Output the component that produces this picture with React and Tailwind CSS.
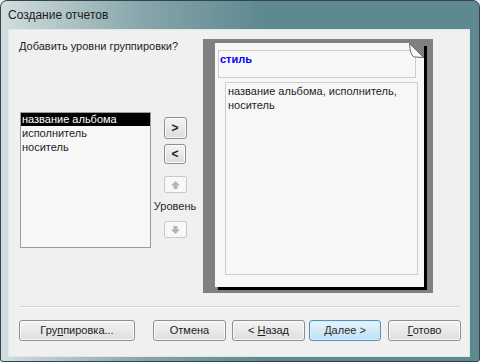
import React from 'react';

const font = { fontFamily: '"Liberation Sans", Arial, sans-serif' };

// маленькая стрелка для неактивных кнопок уровня
const LevelArrow = ({ down }) => (
  <svg width="9" height="8" viewBox="0 0 9 8" className={down ? 'rotate-180' : ''}>
    <path d="M4.5 0 L9 4.5 L6.5 4.5 L6.5 8 L2.5 8 L2.5 4.5 L0 4.5 Z" fill="#b4b4b4" />
  </svg>
);

const MoveButton = ({ children, className }) => (
  <div
    className={`flex items-center justify-center rounded-[3px] border border-[#8e8f8f] bg-linear-to-b from-[#f4f4f4] to-[#dcdcdc] text-[12px] font-bold text-[#1a1a1a] shadow-[inset_0_0_0_1px_#fbfbfb] ${className}`}
  >
    {children}
  </div>
);

const LevelButton = ({ down, className }) => (
  <div className={`flex h-[17px] w-[23px] items-center justify-center rounded-[2px] border border-[#c9c9c9] bg-[#f8f8f8] ${className}`}>
    <LevelArrow down={down} />
  </div>
);

const DialogButton = ({ children, className, primary }) => (
  <div
    className={`flex h-[21px] items-center justify-center rounded-[3px] border text-[11px] ${
      primary
        ? 'border-[#4f93c4] bg-linear-to-b from-[#e8f4fb] to-[#bfe0f2] text-[#2a2a2a] shadow-[inset_0_0_0_1px_#d4ecf8]'
        : 'border-[#8f8f8f] bg-linear-to-b from-[#f4f4f4] to-[#dedede] text-[#1a1a1a] shadow-[inset_0_0_0_1px_#fafafa]'
    } ${className}`}
  >
    <span className="whitespace-pre">{children}</span>
  </div>
);

export default function App() {
  return (
    <div className="h-[362px] w-[480px] overflow-hidden bg-[#e9eef0]" style={font}>
      <div className="flex h-full flex-col rounded-t-[7px] rounded-b-[3px] border border-[#33454b] bg-linear-to-r from-[#d2dedf] via-[#86a5aa] via-30% to-[#5e8990] to-55%">
        {/* заголовок окна */}
        <div className="flex h-[28px] items-center pl-[7px] text-[12px] text-[#1b1b1b]">Создание отчетов</div>

        {/* клиентская область */}
        <div className="mb-[4px] ml-[7px] mr-[9px] flex-1 border border-[#dfe7e8] bg-[#f0f0f0] pl-[10px] pt-[9px]">
          <div className="flex h-[254px]">
            <div className="flex w-[184px] flex-col">
              <div className="mt-[1px] h-[13px] text-[11px] leading-[13px] text-[#1e1e1e]">Добавить уровни группировки?</div>
              <div className="mt-[59px] flex">
                <div className="ml-[1px] h-[136px] w-[131px] border border-[#9c9c9c] bg-[#f7f7f7] text-[11px] leading-[13px] text-[#1e1e1e]">
                  <div className="h-[13px] bg-black pl-[1px] text-white">название альбома</div>
                  <div className="mt-[1px] h-[13px] pl-[1px]">исполнитель</div>
                  <div className="mt-[1px] h-[13px] pl-[1px]">носитель</div>
                </div>
                <div className="ml-[1px] flex w-[46px] flex-col items-center pt-[5px]">
                  <MoveButton className="h-[22px] w-[23px]">&gt;</MoveButton>
                  <MoveButton className="mt-[5px] h-[20px] w-[22px]">&lt;</MoveButton>
                  <LevelButton className="mt-[12px]" />
                  <div className="mt-[7px] h-[13px] text-[11px] leading-[13px] text-[#1e1e1e]">Уровень</div>
                  <LevelButton down className="mt-[8px]" />
                </div>
              </div>
            </div>

            {/* образец отчета */}
            <div className="h-[254px] w-[230px] bg-[#808080] pl-[12px] pt-[4px]">
              <div className="relative h-[244px] w-[209px] bg-[#f7f7f7] pl-[3px] pt-[7px] shadow-[3px_3px_0_#000]">
                <svg className="absolute right-0 top-0" width="15" height="15" viewBox="0 0 15 15">
                  <path d="M0 0 L15 0 L15 15 Z" fill="#808080" />
                  <path d="M0.5 0.5 L14.5 14.5 L5 14 Q1 12 0.5 0.5 Z" fill="#f7f7f7" stroke="#6a6a6a" strokeWidth="1" />
                </svg>
                <div className="h-[28px] w-[198px] border border-[#cdcdcd] pl-[1px] pt-[2px] text-[11px] font-bold leading-[13px] text-[#0000ff]">стиль</div>
                <div className="ml-[7px] mt-[4px] h-[193px] w-[193px] border border-[#cdcdcd] pl-[2px] pt-[1px] text-[11px] leading-[14px] text-[#1e1e1e]">
                  название альбома, исполнитель,
                  <br />
                  носитель
                </div>
              </div>
            </div>
          </div>

          <div className="mt-[13px] h-px w-[441px] bg-[#d4d4d4]" />
          <div className="w-[441px] border-t border-[#fbfbfb]" />

          <div className="mt-[12px] flex">
            <DialogButton className="w-[116px]">
              Гру<span className="underline">п</span>пировка...
            </DialogButton>
            <DialogButton className="ml-[18px] w-[73px]">Отмена</DialogButton>
            <DialogButton className="ml-[6px] w-[73px]">
              {'< '}<span className="underline">Н</span>азад
            </DialogButton>
            <DialogButton primary className="ml-[4px] w-[72px]">
              <span className="underline">Д</span>алее &gt;
            </DialogButton>
            <DialogButton className="ml-[7px] w-[73px]">
              <span className="underline">Г</span>отово
            </DialogButton>
          </div>
        </div>
      </div>
    </div>
  );
}
